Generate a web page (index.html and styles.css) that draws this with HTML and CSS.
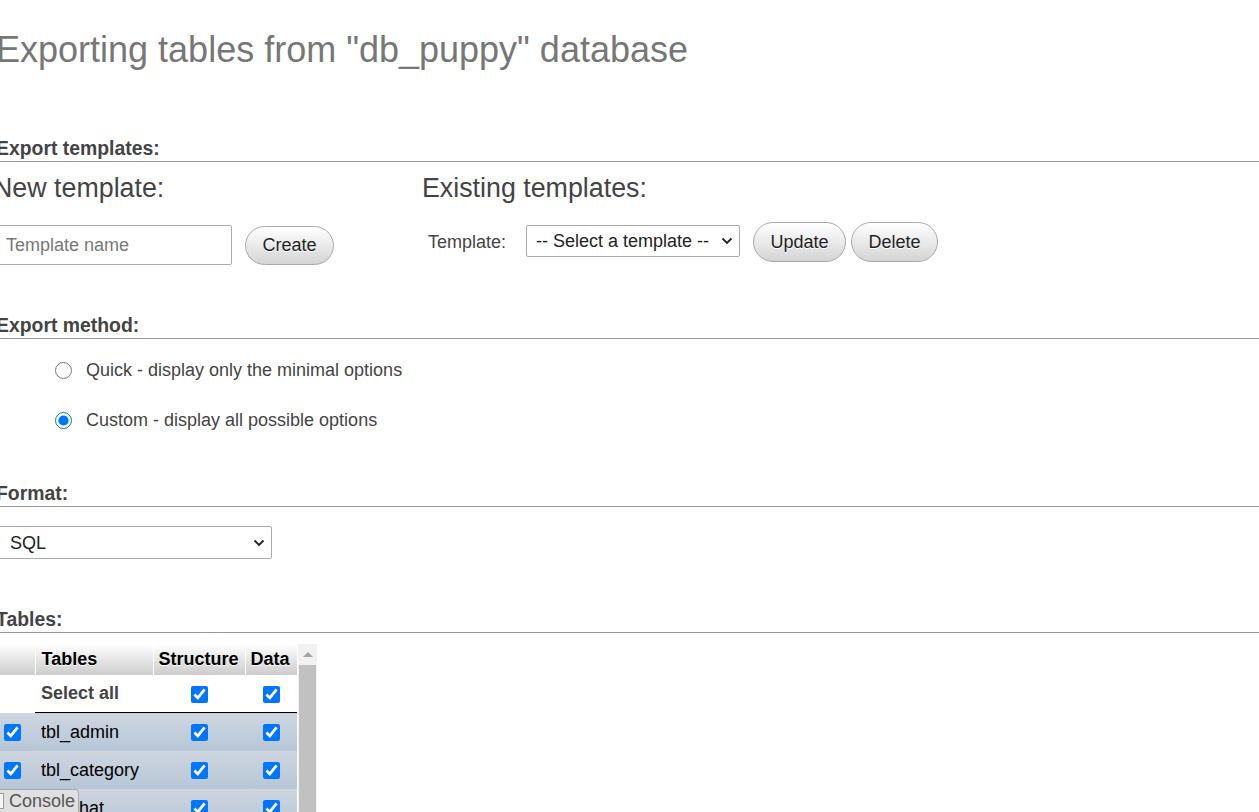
FILE: index.html
```html
<!DOCTYPE html>
<html lang="en">
<head>
<meta charset="utf-8">
<title>Export</title>
<link rel="stylesheet" href="styles.css">
</head>
<body>
<div class="page">
  <h2 class="title">Exporting tables from "db_puppy" database</h2>

  <section class="block">
    <h3 class="block-title">Export templates:</h3>
    <div class="tpl-row">
      <div class="tpl-col tpl-new">
        <h4 class="tpl-head tpl-head-new">New template:</h4>
        <div class="controls controls-new">
          <input class="text-input" type="text" placeholder="Template name">
          <button class="btn btn-create" type="button">Create</button>
        </div>
      </div>
      <div class="tpl-col tpl-existing">
        <h4 class="tpl-head">Existing templates:</h4>
        <div class="controls controls-existing">
          <label class="tpl-label">Template:</label>
          <div class="select-wrap select-tpl">
            <select class="select"><option>-- Select a template --</option></select>
            <svg class="chev" width="12" height="8" viewBox="0 0 12 8"><path d="M1.5 1.5 L6 6 L10.5 1.5" fill="none" stroke="#222" stroke-width="1.8"/></svg>
          </div>
          <button class="btn btn-update" type="button">Update</button>
          <button class="btn btn-delete" type="button">Delete</button>
        </div>
      </div>
    </div>
  </section>

  <section class="block block-method">
    <h3 class="block-title">Export method:</h3>
    <ul class="radio-list">
      <li class="radio-item"><input type="radio" name="m" class="radio"><label>Quick - display only the minimal options</label></li>
      <li class="radio-item"><input type="radio" name="m" class="radio" checked><label>Custom - display all possible options</label></li>
    </ul>
  </section>

  <section class="block block-format">
    <h3 class="block-title">Format:</h3>
    <div class="select-wrap select-format">
      <select class="select"><option>SQL</option></select>
      <svg class="chev" width="12" height="8" viewBox="0 0 12 8"><path d="M1.5 1.5 L6 6 L10.5 1.5" fill="none" stroke="#222" stroke-width="1.8"/></svg>
    </div>
  </section>

  <section class="block block-tables">
    <h3 class="block-title">Tables:</h3>
    <div class="table-wrap">
      <table class="export-table">
        <thead>
          <tr>
            <th class="c-check"></th>
            <th class="c-name">Tables</th>
            <th class="c-struct">Structure</th>
            <th class="c-data">Data</th>
          </tr>
        </thead>
        <tbody>
          <tr class="row-all">
            <td class="c-check"></td>
            <td class="c-name">Select all</td>
            <td class="c-struct"><input type="checkbox" class="cb" checked></td>
            <td class="c-data"><input type="checkbox" class="cb" checked></td>
          </tr>
          <tr class="row-marked">
            <td class="c-check"><input type="checkbox" class="cb" checked></td>
            <td class="c-name">tbl_admin</td>
            <td class="c-struct"><input type="checkbox" class="cb" checked></td>
            <td class="c-data"><input type="checkbox" class="cb" checked></td>
          </tr>
          <tr class="row-marked">
            <td class="c-check"><input type="checkbox" class="cb" checked></td>
            <td class="c-name">tbl_category</td>
            <td class="c-struct"><input type="checkbox" class="cb" checked></td>
            <td class="c-data"><input type="checkbox" class="cb" checked></td>
          </tr>
          <tr class="row-marked">
            <td class="c-check"><input type="checkbox" class="cb" checked></td>
            <td class="c-name">tbl_chat</td>
            <td class="c-struct"><input type="checkbox" class="cb" checked></td>
            <td class="c-data"><input type="checkbox" class="cb" checked></td>
          </tr>
        </tbody>
      </table>
      <div class="scrollbar">
        <div class="sb-arrow"></div>
        <div class="sb-thumb"></div>
      </div>
    </div>
  </section>
</div>

<div class="console-tab"><span class="console-box"></span><span class="console-text">Console</span></div>
</body>
</html>
```

FILE: styles.css
```css
html, body {
  margin: 0;
  padding: 0;
  background: #fff;
  overflow: hidden;
}
body {
  font-family: "Liberation Sans", Arial, sans-serif;
  font-size: 18px;
  color: #444;
  height: 812px;
}
.page {
  margin-left: -4px;
}
.title {
  margin: 29px 0 0 0;
  font-size: 36px;
  line-height: 41px;
  font-weight: normal;
  color: #777;
  white-space: nowrap;
}
.block-title {
  margin: 0;
  font-size: 19.4px;
  line-height: 22px;
  font-weight: bold;
  color: #444;
  padding-bottom: 2px;
  border-bottom: 1px solid #999;
  width: 1270px;
}
.block { margin-top: 67px; }
.block-method { margin-top: 49px; }
.block-format { margin-top: 51px; }
.block-tables { margin-top: 49px; }

.tpl-row { display: flex; }
.tpl-col { display: flex; flex-direction: column; }
.tpl-new { width: 426px; }
.tpl-head {
  margin: 11px 0 0 0;
  font-size: 26.8px;
  line-height: 30px;
  font-weight: normal;
  color: #444;
  white-space: nowrap;
}
.tpl-head-new { margin-left: -3px; }
.controls { display: flex; align-items: center; }
.controls-new { margin-top: 22px; height: 40px; }
.controls-existing { margin-top: 19px; height: 40px; }

.text-input {
  box-sizing: border-box;
  width: 236px;
  height: 40px;
  border: 1px solid #aaa;
  border-radius: 2px;
  padding: 0 0 0 9px;
  font-family: inherit;
  font-size: 18px;
  color: #444;
  outline: none;
}
.text-input::placeholder { color: #777; }

.btn {
  box-sizing: border-box;
  height: 40px;
  border: 1px solid #aaa;
  border-radius: 20px;
  background: linear-gradient(#ffffff, #d4d4d4);
  font-family: inherit;
  font-size: 18px;
  color: #222;
  text-shadow: 0 1px 0 #fff;
  padding: 0;
  cursor: pointer;
}
.btn-create { width: 89px; margin-left: 13px; height: 39px; margin-top: 1px; }
.btn-update { width: 93px; margin-left: 13px; }
.btn-delete { width: 87px; margin-left: 5px; }

.tpl-label { margin-left: 6px; width: 98px; color: #444; }

.select-wrap {
  position: relative;
  box-sizing: border-box;
}
.select {
  box-sizing: border-box;
  width: 100%;
  height: 100%;
  appearance: none;
  -webkit-appearance: none;
  border: 1px solid #aaa;
  border-radius: 2px;
  background: #fff;
  font-family: inherit;
  font-size: 18px;
  color: #222;
  outline: none;
  display: block;
}
.chev {
  position: absolute;
  top: 50%;
  margin-top: -4px;
  pointer-events: none;
}
.select-tpl { width: 214px; height: 32px; margin-top: -2px; }
.select-tpl .select { padding-left: 9px; }
.select-tpl .chev { right: 7px; }
.select-format { width: 276px; height: 33px; margin-top: 19px; }
.select-format .select { padding-left: 13px; }
.select-format .chev { right: 7px; }

.radio-list {
  list-style: none;
  margin: 20px 0 0 0;
  padding: 0 0 0 59px;
}
.radio-item {
  display: flex;
  align-items: center;
  height: 22px;
  margin-bottom: 28px;
  white-space: nowrap;
}
.radio {
  width: 17px;
  height: 17px;
  margin: 0 14px 0 0;
  accent-color: #0075ff;
}

.table-wrap {
  display: flex;
  margin-top: 11px;
  margin-left: -8px;
  height: 200px;
}
.export-table {
  border-collapse: collapse;
  border-spacing: 0;
  align-self: flex-start;
}
.export-table th {
  height: 31px;
  padding: 0 6px;
  background: linear-gradient(#ffffff, #cccccc);
  color: #000;
  font-weight: bold;
  text-align: left;
  text-shadow: 0 1px 0 #fff;
  border-right: 1px solid #fff;
  white-space: nowrap;
}
.export-table th.c-data { border-right: none; }
.export-table td {
  height: 38px;
  padding: 0 6px;
  color: #000;
  white-space: nowrap;
}
.c-check { width: 33px; text-align: center; }
.export-table td.c-check { padding: 0 6px 0 8px; }
.c-name { width: 105px; }
.c-struct { width: 77px; text-align: center; }
.c-data { width: 40px; text-align: center; }
.export-table th.c-struct, .export-table th.c-data { text-align: left; padding-left: 5px; }
.row-all td { background: #fff; height: 37px; }
.row-all td.c-name { font-weight: bold; color: #444; }
.row-all td.c-name, .row-all td.c-struct, .row-all td.c-data { border-bottom: 1px solid #000; }
.row-marked td {
  background: linear-gradient(#ced6df, #b6c6d7);
}
.cb {
  width: 17px;
  height: 17px;
  margin: 0;
  vertical-align: middle;
  accent-color: #0075ff;
}

.scrollbar {
  width: 19px;
  margin-left: 1px;
  background: #f1f1f1;
  display: flex;
  flex-direction: column;
  align-items: center;
}
.sb-arrow {
  margin-top: 8px;
  width: 0;
  height: 0;
  border-left: 5px solid transparent;
  border-right: 5px solid transparent;
  border-bottom: 5px solid #a3a3a3;
}
.sb-thumb {
  margin-top: 8px;
  width: 17px;
  flex: 1;
  background: #c1c1c1;
}

.console-tab {
  position: fixed;
  left: -8px;
  bottom: 0;
  height: 23px;
  width: 87px;
  box-sizing: border-box;
  background: #e0e0e0;
  border: 1px solid #aaa;
  border-bottom: none;
  border-radius: 0 4px 0 0;
  display: flex;
  align-items: center;
  font-size: 18px;
  color: #555;
}
.console-box {
  width: 9px;
  height: 14px;
  border: 1px solid #999;
  background: #f6f6f6;
}
.console-text { margin-left: 5px; }
```
